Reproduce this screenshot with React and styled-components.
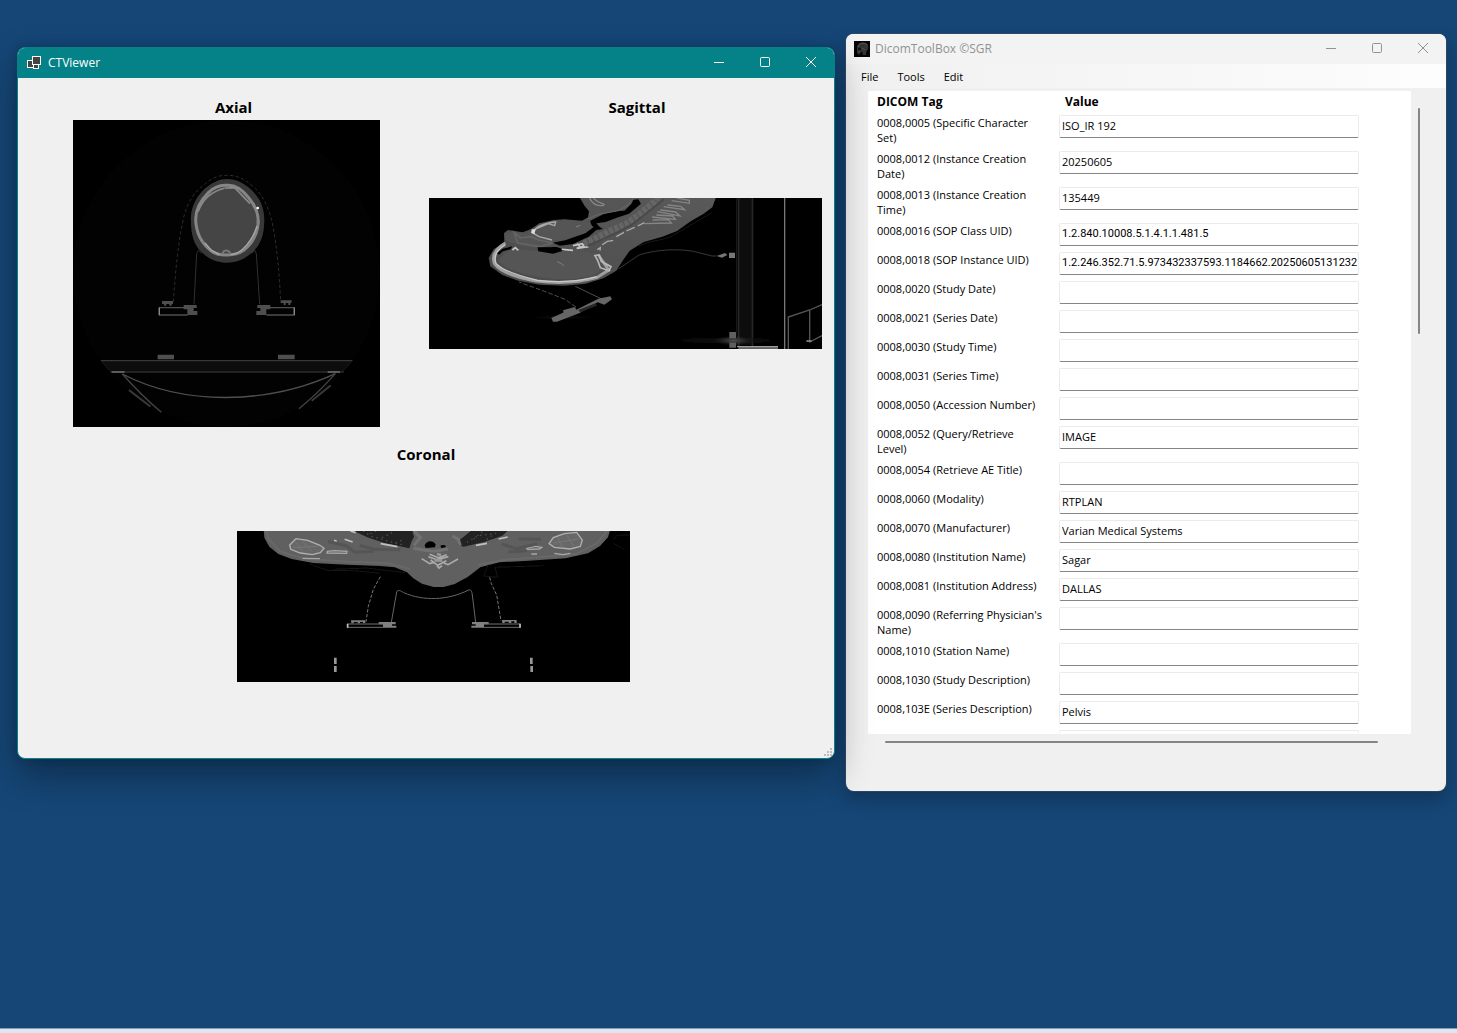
import React from "react";
import styled, { createGlobalStyle } from "styled-components";

const Global = createGlobalStyle`
  * { box-sizing: border-box; }
  body {
    margin: 0;
    background: #154676;
    font-family: "Open Sans", "Noto Sans", sans-serif;
    font-size: 12px;
    line-height: 15px;
    color: #000;
  }
`;

const Screen = styled.div`
  min-height: 100vh;
  display: flex;
  flex-direction: column;
  overflow: hidden;
`;

const Desktop = styled.main`
  flex: 1;
  display: grid;
  grid-template-columns: 818fr 600fr;
  align-items: start;
  gap: 11px;
  padding: 34px 11px 34px 17px;
`;

const Taskbar = styled.footer`
  height: 5px;
  background: #dde7f4;
  border-top: 1px solid #9099ab;
`;

const Window = styled.section`
  position: relative;
  z-index: ${(p) => (p.$active ? 2 : 1)};
  margin-top: ${(p) => (p.$active ? "13px" : "0")};
  border: ${(p) => (p.$active ? "1px solid #048287" : "0")};
  border-radius: 8px;
  background: #f0f0f0;
  box-shadow: ${(p) =>
    p.$active
      ? "0 16px 36px rgba(0, 0, 0, 0.36), 0 0 8px rgba(0, 0, 0, 0.16)"
      : "0 0 0 1px rgba(70, 80, 95, 0.55), 0 8px 18px rgba(0, 0, 0, 0.26)"};
`;

const TitleBar = styled.header`
  display: flex;
  align-items: center;
  height: 30px;
  padding-left: ${(p) => (p.$active ? "9px" : "8px")};
  border-radius: 7px 7px 0 0;
  background: ${(p) => (p.$active ? "#048287" : "#f3f3f3")};
  color: ${(p) => (p.$active ? "#fff" : "#929292")};
`;

const Title = styled.h1`
  flex: 1;
  margin: 0 0 0 5px;
  font-size: 12px;
  font-weight: 400;
  line-height: 16px;
`;

const CaptionButton = styled.button`
  display: flex;
  align-items: center;
  justify-content: center;
  align-self: flex-start;
  width: 46px;
  height: 28px;
  padding: 0;
  border: 0;
  background: transparent;
  color: inherit;
`;

const Glyph = styled.svg`
  display: block;
  fill: none;
  stroke: currentColor;
`;

const Views = styled.div`
  display: grid;
  grid-template-columns: 1fr 1fr;
  column-gap: 6px;
  padding: 20px 12px 76px;
`;

const View = styled.figure`
  display: flex;
  flex-direction: column;
  margin: 0;
  grid-column: ${(p) => (p.$wide ? "1 / -1" : "auto")};
`;

const ViewTitle = styled.figcaption`
  height: 22px;
  padding-left: ${(p) => p.$indent || 0}px;
  font-size: 15px;
  font-weight: 700;
  line-height: 18px;
  text-align: center;
`;

const ViewBody = styled.div`
  display: flex;
  align-items: center;
  justify-content: center;
  height: 307px;
  padding-left: ${(p) => p.$indent || 0}px;
`;

const WideBody = styled(ViewBody)`
  height: 151px;
  margin-top: 64px;
`;

const Scan = styled.svg`
  display: block;
  width: 100%;
  max-width: ${(p) => p.$max}px;
  background: #000;
  overflow: hidden;
`;

const Gap = styled.div`
  grid-column: 1 / -1;
  height: 18px;
`;

const Grip = styled.svg`
  position: absolute;
  right: 1px;
  bottom: 1px;
  fill: #bdbdbd;
`;

const Menu = styled.nav`
  display: flex;
  gap: 5px;
  height: 24px;
  padding-left: 8px;
  background: linear-gradient(90deg, #f0f0f0, #fdfdfd);
`;

const MenuButton = styled.button`
  padding: 0 7px;
  border: 0;
  background: transparent;
  font: inherit;
  font-size: 11px;
  color: #000;
`;

const Client = styled.div`
  display: grid;
  grid-template-columns: 1fr 9px;
  padding: 3px 26px 48px 22px;
`;

const Panel = styled.div`
  height: 643px;
  padding: 0 6px;
  background: #fff;
  border-bottom: 1px solid #fff;
  border-radius: 0 0 2px 2px;
  overflow: hidden;
`;

const VerticalBar = styled.div`
  width: 2px;
  height: 226px;
  margin: 17px 0 0 7px;
  border-radius: 1px;
  background: #858585;
`;

const HorizontalBar = styled.div`
  height: 2px;
  margin: 7px 33px 0 17px;
  border-radius: 1px;
  background: #858585;
`;

const TagTable = styled.table`
  width: 485px;
  border-collapse: collapse;
  table-layout: fixed;
  font-size: 11px;
`;

const ColumnHead = styled.th`
  width: ${(p) => p.$width || "auto"};
  padding: 3px 3px 3px ${(p) => p.$left}px;
  font-size: 12px;
  font-weight: 700;
  text-align: left;
`;

const TagCell = styled.th`
  padding: 3px 12px 3px 3px;
  font-weight: 400;
  text-align: left;
  vertical-align: top;
`;

const ValueCell = styled.td`
  padding: 3px 0 3px 3px;
  vertical-align: top;
`;

const ValueInput = styled.input`
  display: block;
  width: 100%;
  height: 23px;
  padding: 0 0 2px 2px;
  border: 1px solid #ebebeb;
  border-bottom-color: #858585;
  border-radius: 2px;
  background: #fff;
  font: inherit;
  font-family: ${(p) => (p.$uid ? 'Roboto, "Open Sans", sans-serif' : "inherit")};
  color: #000;
  outline: 0;
`;

const tags = [
  ["0008,0005", "Specific Character Set", "ISO_IR 192"],
  ["0008,0012", "Instance Creation Date", "20250605"],
  ["0008,0013", "Instance Creation Time", "135449"],
  ["0008,0016", "SOP Class UID", "1.2.840.10008.5.1.4.1.1.481.5"],
  ["0008,0018", "SOP Instance UID", "1.2.246.352.71.5.973432337593.1184662.20250605131232"],
  ["0008,0020", "Study Date", ""],
  ["0008,0021", "Series Date", ""],
  ["0008,0030", "Study Time", ""],
  ["0008,0031", "Series Time", ""],
  ["0008,0050", "Accession Number", ""],
  ["0008,0052", "Query/Retrieve Level", "IMAGE"],
  ["0008,0054", "Retrieve AE Title", ""],
  ["0008,0060", "Modality", "RTPLAN"],
  ["0008,0070", "Manufacturer", "Varian Medical Systems"],
  ["0008,0080", "Institution Name", "Sagar"],
  ["0008,0081", "Institution Address", "DALLAS"],
  ["0008,0090", "Referring Physician's Name", ""],
  ["0008,1010", "Station Name", ""],
  ["0008,1030", "Study Description", ""],
  ["0008,103E", "Series Description", "Pelvis"],
];

function CaptionButtons() {
  return (
    <>
      <CaptionButton type="button" aria-label="Minimize">
        <Glyph width="10" height="10"><path d="M0 5.5H10" /></Glyph>
      </CaptionButton>
      <CaptionButton type="button" aria-label="Maximize">
        <Glyph width="10" height="10"><rect x=".5" y=".5" width="9" height="9" rx="1" /></Glyph>
      </CaptionButton>
      <CaptionButton type="button" aria-label="Close">
        <Glyph width="10" height="10"><path d="M0 0L10 10M10 0L0 10" /></Glyph>
      </CaptionButton>
    </>
  );
}

function FormIcon() {
  return (
    <svg width="16" height="14" viewBox="0 0 16 14" fill="#444" stroke="#fff" aria-hidden="true">
      <rect x=".5" y="4.5" width="6" height="7" />
      <rect x="6.5" y="8.500" width="5" height="4" />
      <rect x="5.5" y=".5" width="8" height="8" />
    </svg>
  );
}

function SkullIcon() {
  return (
    <svg width="16" height="16" viewBox="0 0 16 16" aria-hidden="true">
      <rect width="16" height="16" fill="#050505" />
      <path d="M3 7C3 3 6 1 10 1.500C14 2 15 5 14 8C13 10 12 10 12 14H9L8 10L5 14L3 12Z" fill="#343434" />
      <path d="M4 6C5 2 10 1 13 4" stroke="#555" fill="none" />
      <circle cx="5.500" cy="8" r="1.500" fill="#101010" />
      <path d="M4 11L6 10M8 7L11 9" stroke="#555" fill="none" />
    </svg>
  );
}

function AxialScan() {
  return (
    <Scan $max={307} viewBox="0 0 921 921" role="img" aria-label="Axial slice">
      <defs>
        <filter id="soft"><feGaussianBlur stdDeviation="1.8" /></filter>
      </defs>
      <circle cx="460" cy="460" r="457" fill="#020202" stroke="#060606" strokeWidth="2" />
      <g filter="url(#soft)" fill="none">
        <path d="M301 546C307 460 314 375 332 292C344 240 371 211 397 191C423 168 443 166 464 166C497 166 520 181 543 202C570 225 590 267 600 320C613 390 619 465 623 543" stroke="#2c2c2c" strokeWidth="3" strokeDasharray="10 7" />
        <path d="M363 553L371 401L377 391L386 400M560 553L550 401L545 391L536 400" stroke="#303030" strokeWidth="3" />
        <path d="M462 177C489 177 512 189 532 207C558 230 574 260 574 300C574 352 558 378 539 396C517 417 490 428 460 428C429 428 405 415 386 397C361 373 352 340 354 286C357 254 375 224 397 205C419 187 440 177 462 177Z" fill="#393939" />
        <path d="M462 196C487 194 508 209 527 233C545 254 556 274 556 306C554 345 535 372 512 391C489 408 436 410 415 393C386 371 369 336 368 298C368 260 389 235 407 217C426 199 442 194 462 196Z" fill="#454545" stroke="#868686" strokeWidth="9" />
        <path d="M375 275C389 238 416 213 458 204L485 203L531 251" stroke="#8a8a8a" strokeWidth="5" />
        <path d="M396 369L415 391L439 403M473 404C507 402 540 358 552 318" stroke="#a8a8a8" strokeWidth="4" />
        <path d="M449 401C451 388 468 388 472 401" stroke="#757575" strokeWidth="6" />
        <path d="M454 200V207M551 300V309" stroke="#666" strokeWidth="4" />
        <circle cx="554" cy="264" r="4" fill="#fff" />
        <path d="M267 543H300V552H296V557H289V552H280V557H273V552H267ZM623 541H656V548H652V555H646V549H638V555H632V549H623ZM332 555H371V564H362V573H373V585H343V568H332ZM592 555H553V564H562V573H550V585H580V568H592Z" fill="#505050" />
        <path d="M344 563H259V585H344M580 563H664V585H580" stroke="#505050" strokeWidth="4" />
        <path d="M259 563V585M664 563V585" stroke="#888" strokeWidth="4" />
        <path d="M254 704H303V718H254ZM615 704H665V718H615Z" fill="#505050" />
        <path d="M84 722H838L810 756H112Z" fill="#080808" />
        <path d="M84 722H838" stroke="#383838" strokeWidth="4" />
        <path d="M112 756H812" stroke="#2c2c2c" strokeWidth="4" />
        <path d="M116 756H155M764 756H801" stroke="#5c5c5c" strokeWidth="6" />
        <path d="M84 722L109 751M838 722L810 753" stroke="#1c1c1c" strokeWidth="3" />
        <path d="M148 762C330 856 580 856 787 761" stroke="#505050" strokeWidth="4" />
        <path d="M148 762Q205 826 265 877M787 761Q735 820 678 866" stroke="#444" strokeWidth="4" />
        <path d="M170 812L230 858M771 798L718 841" stroke="#383838" strokeWidth="6" strokeLinecap="round" />
      </g>
    </Scan>
  );
}

function SagittalScan() {
  return (
    <Scan $max={393} viewBox="0 0 1179 453" role="img" aria-label="Sagittal slice">
      <defs>
        <linearGradient id="neck" x1="0" y1="1" x2="1" y2="0">
          <stop offset="0" stopColor="#4b4b4b" />
          <stop offset="1" stopColor="#5a5a5a" />
        </linearGradient>
        <radialGradient id="flare">
          <stop offset="0" stopColor="#777" stopOpacity=".6" />
          <stop offset="1" stopColor="#444" stopOpacity="0" />
        </radialGradient>
        <linearGradient id="streak">
          <stop offset="0" stopColor="#141414" stopOpacity="0" />
          <stop offset=".6" stopColor="#141414" />
          <stop offset="1" stopColor="#141414" stopOpacity="0" />
        </linearGradient>
      </defs>
      <g filter="url(#soft)" fill="none">
        <path d="M450 -5L467 24L480 40L477 58L459 68L407 64L374 66L331 76L305 94L281 103L237 96L225 105L226 133L194 154L179 180L184 205L220 231L268 248L331 260L407 263L470 257L523 241L562 218L581 188L602 158L644 132L700 116L744 99L785 70L824 47L850 28L862 -5Z" fill="url(#neck)" />
        <path d="M229 135C201 151 188 172 196 196C214 223 267 239 322 249C386 257 451 253 503 239L539 216L508 171" stroke="#a0a0a0" strokeWidth="9" />
        <path d="M229 141C202 156 194 175 201 196C222 220 280 236 326 247C389 254 450 251 503 236" stroke="#c8c8c8" strokeWidth="4" />
        <path d="M235 157C290 149 321 164 382 163L443 151L506 172L518 217C477 247 394 248 333 238C275 227 221 213 208 187Z" fill="#545454" />
        <path d="M229 109L250 98L287 107L323 104L373 122L378 140L331 151L280 144L229 126Z" fill="#555" />
        <path d="M256 104L275 120L306 116L329 126L371 135L334 146L266 135Z" stroke="#656565" strokeWidth="5" />
        <path d="M325 148L383 147L410 156L372 167L328 160ZM204 166L221 152L250 145L245 154L222 160L210 170ZM371 134L409 127L464 107L489 85L483 69L524 48L561 39L586 38L607 18L613 5L628 4L636 17L622 29L600 47L568 58L530 72L502 76L512 87L522 93L502 96L479 116L432 138L393 143Z" fill="#030303" />
        <path d="M316 98C334 74 370 66 418 68L477 75L494 87L470 105L400 126L332 119Z" fill="#555" />
        <path d="M309 105C320 84 351 75 380 72L377 83L358 77L324 91L308 103L330 116L369 126" stroke="#a8a8a8" strokeWidth="4" />
        <path d="M308 94L320 94L316 109L307 104Z" fill="#ddd" />
        <path d="M481 -3C488 18 507 26 525 22M492 -3C500 12 514 14 527 20" stroke="#888" strokeWidth="4" />
        <path d="M432 143L460 137L465 144L443 151L479 146M443 137L455 148M250 156L259 149L268 157M398 154L432 157" stroke="#c4c4c4" strokeWidth="5" />
        <path d="M464 137L500 121L544 98L590 79L633 48L673 14L687 -6" stroke="#656565" strokeWidth="20" strokeDasharray="13 4" />
        <path d="M475 144L520 124L570 101L614 76L662 38L705 4" stroke="#4a4a4a" strokeWidth="6" />
        <path d="M505 155L514 149L513 158M519 141L535 130L555 127M562 116L585 103M592 99L617 88M626 84L646 74" stroke="#aaa" strokeWidth="4" />
        <path d="M645 77L727 75L718 65L671 66M669 57L739 64L731 54L682 51M685 41L753 54L740 42L694 36M704 26L767 35L755 25L716 21M728 8L781 16L781 7L744 0" stroke="#858585" strokeWidth="4" />
        <path d="M534 112L514 137L529 151L539 163M551 119L558 139" stroke="#555" strokeWidth="3" />
        <path d="M384 191L397 197L405 204M441 87L454 82" stroke="#808080" strokeWidth="3" />
        <path d="M498 173L511 171L517 190L546 206L540 218L514 209L506 187Z" stroke="#b8b8b8" strokeWidth="5" />
        <path d="M477 63L508 49L569 38L598 20L613 -1" stroke="#696969" strokeWidth="3" />
        <path d="M568 213L602 190L630 171C680 155 744 151 793 160L849 174H863" stroke="#383838" strokeWidth="3" />
        <path d="M863 174L888 165L895 171L879 179ZM900 164H918V180H900Z" fill="#777" />
        <path d="M439 265L520 304" stroke="#4d4d4d" strokeWidth="3" />
        <path d="M441 327L408 304L352 282L270 252" stroke="#4d4d4d" strokeWidth="3" strokeDasharray="14 6" />
        <path d="M367 360L438 328L442 335L508 302L544 295L549 304L526 320L506 313L452 345L384 371H372ZM402 337L437 327L436 334L404 344Z" fill="#666" />
        <path d="M448 336L500 316L504 323L454 343Z" fill="#252525" />
        <path d="M920 0H975V442H920Z" fill="#090909" />
        <path d="M929 0V444M970 0V444" stroke="#252525" strokeWidth="5" />
        <path d="M923 0V400M963 0V440" stroke="#191919" strokeWidth="3" />
        <path d="M1067 0V453" stroke="#777" strokeWidth="4" />
        <path d="M1078 453V357L1142 336L1179 320M1142 336V432L1179 413" stroke="#565656" strokeWidth="4" />
        <path d="M1132 429H1148" stroke="#888" strokeWidth="5" />
        <path d="M901 402H921V449H901ZM928 444H1047V453H928Z" fill="#606060" />
        <path d="M924 446H1047" stroke="#aaa" strokeWidth="3" />
        <rect x="700" y="421" width="360" height="13" fill="url(#streak)" />
        <ellipse cx="914" cy="428" rx="56" ry="16" fill="url(#flare)" />
        <ellipse cx="400" cy="358" rx="100" ry="8" fill="url(#flare)" opacity=".25" />
        <path d="M630 144C675 122 704 132 745 105L850 43" stroke="#171717" strokeWidth="3" />
      </g>
    </Scan>
  );
}

function CoronalScan() {
  return (
    <Scan $max={393} viewBox="0 0 1179 453" role="img" aria-label="Coronal slice">
      <g filter="url(#soft)" fill="none">
        <path d="M80 -5L82 20L97 47L124 69L164 84L229 96L330 101L430 105L473 109L510 124L529 142L555 158L590 168H620L653 159L692 138L730 109L787 94L875 89L986 82L1053 67L1089 45L1113 19L1120 -5Z" fill="#606060" />
        <path d="M88 0L95 24L129 61L202 83L340 92L447 96L520 114M1110 0L1079 37L1018 68L924 77L800 87L724 102" stroke="#686868" strokeWidth="6" />
        <path d="M351 0L389 18L440 35L517 52L523 33L531 18L525 -5H346ZM817 -5L796 14L741 33L680 47L663 41L665 29L683 15L708 -5Z" fill="#202020" />
        <path d="M378 0L404 16L455 31L500 42M400 8L419 0M435 20L467 4M476 36L503 24M690 34L724 14L771 8M710 24L739 0M749 25L785 1" stroke="#555" strokeWidth="4" strokeDasharray="4 11" />
        <path d="M532 0L550 20L531 43M646 15L664 25L670 44M529 52L564 58L594 61L633 54" stroke="#727272" strokeWidth="9" />
        <path d="M563 43C570 27 588 28 596 40L594 49L566 51ZM610 44C619 39 631 43 625 49L613 51Z" fill="#020202" />
        <path d="M158 42L177 23L212 28L249 43L261 52L250 65L226 71L190 66L161 55Z" fill="#686868" stroke="#b0b0b0" strokeWidth="4" />
        <path d="M178 36L196 60M196 32L226 62M168 50L240 46" stroke="#777" strokeWidth="3" />
        <path d="M936 38L949 20L982 8L1019 4L1036 27L1030 46L1000 54L952 49Z" fill="#686868" stroke="#b0b0b0" strokeWidth="4" />
        <path d="M962 20L976 48M990 12L1010 46M950 36L1024 24" stroke="#777" strokeWidth="3" />
        <path d="M271 61L292 59L330 61L329 67L270 66ZM197 82L249 83M868 51L895 46L914 49L907 54L871 55ZM883 69H900M952 67L978 71L1000 67" stroke="#a8a8a8" strokeWidth="4" />
        <path d="M291 28L299 31M323 25L347 33M431 38L481 47M340 0L356 5M717 43L750 37M785 24L812 18" stroke="#c0c0c0" strokeWidth="5" />
        <path d="M368 43L414 55L490 56M272 31L329 45L353 64L410 61M794 39L838 53L901 38M814 63L870 59M846 24L912 25" stroke="#555" strokeWidth="9" />
        <path d="M578 70L604 80L629 71M574 77L600 86L634 77M554 83L578 98L591 94M663 84L633 101L620 96M581 87L602 103L628 89M600 104L606 111L615 104" stroke="#ababab" strokeWidth="5" />
        <path d="M600 69L612 72M592 88H616" stroke="#999" strokeWidth="8" />
        <path d="M219 99L270 118L350 119L430 127M289 115L388 111L505 125M754 101L740 135L782 139L774 109L920 104M1130 25L1140 13L1175 12M1130 38L1163 55" stroke="#151515" strokeWidth="3" />
        <path d="M430 137L409 175L394 226L387 272M758 139L763 158L779 192L792 270" stroke="#777" strokeWidth="3" strokeDasharray="10 5" />
        <path d="M463 274L479 183C483 174 490 179 500 185C560 211 631 208 693 178C703 173 704 181 706 192L716 274" stroke="#666" strokeWidth="3" />
        <path d="M342 268H385V276H378V273H369V277H362V273H350V277H343ZM795 267H839V276H832V271H823V276H815V272H803V276H796ZM425 273H476V280H465V284H478V290H438V280H425ZM755 273H705V280H716V284H703V290H741V280H755Z" fill="#808080" />
        <path d="M438 279H331V289H438M741 279H850V289H741" stroke="#707070" strokeWidth="3" />
        <path d="M332 278V290M849 278V290" stroke="#bbb" strokeWidth="5" />
        <path d="M295 380V399M295 405V423M883 380V399M884 405V423" stroke="#999" strokeWidth="8" />
      </g>
    </Scan>
  );
}

export default function App() {
  return (
    <Screen>
      <Global />
      <Desktop>
        <Window $active>
          <TitleBar $active>
            <FormIcon />
            <Title>CTViewer</Title>
            <CaptionButtons />
          </TitleBar>
          <Views>
            <View>
              <ViewTitle $indent={14}>Axial</ViewTitle>
              <ViewBody><AxialScan /></ViewBody>
            </View>
            <View>
              <ViewTitle $indent={23}>Sagittal</ViewTitle>
              <ViewBody><SagittalScan /></ViewBody>
            </View>
            <Gap />
            <View $wide>
              <ViewTitle>Coronal</ViewTitle>
              <WideBody $indent={15}><CoronalScan /></WideBody>
            </View>
          </Views>
          <Grip width="9" height="9" viewBox="0 0 9 9" aria-hidden="true">
            <path d="M6 0h2v2h-2zM3 3h2v2h-2zM6 3h2v2h-2zM0 6h2v2h-2zM3 6h2v2h-2zM6 6h2v2h-2z" />
          </Grip>
        </Window>

        <Window>
          <TitleBar>
            <SkullIcon />
            <Title>DicomToolBox ©SGR</Title>
            <CaptionButtons />
          </TitleBar>
          <Menu aria-label="Main menu">
            <MenuButton type="button">File</MenuButton>
            <MenuButton type="button">Tools</MenuButton>
            <MenuButton type="button">Edit</MenuButton>
          </Menu>
          <Client>
            <Panel>
              <TagTable>
                <thead>
                  <tr>
                    <ColumnHead scope="col" $width="182px" $left={3}>DICOM Tag</ColumnHead>
                    <ColumnHead scope="col" $left={9}>Value</ColumnHead>
                  </tr>
                </thead>
                <tbody>
                  {tags.map(([id, name, value]) => (
                    <tr key={id}>
                      <TagCell scope="row">
                        <label htmlFor={id}>{`${id} (${name})`}</label>
                      </TagCell>
                      <ValueCell>
                        <ValueInput id={id} type="text" defaultValue={value} $uid={name.endsWith("UID")} />
                      </ValueCell>
                    </tr>
                  ))}
                  <tr>
                    <td />
                    <ValueCell>
                      <ValueInput type="text" aria-label="0008,1040" />
                    </ValueCell>
                  </tr>
                </tbody>
              </TagTable>
            </Panel>
            <VerticalBar />
            <HorizontalBar />
          </Client>
        </Window>
      </Desktop>
      <Taskbar />
    </Screen>
  );
}
